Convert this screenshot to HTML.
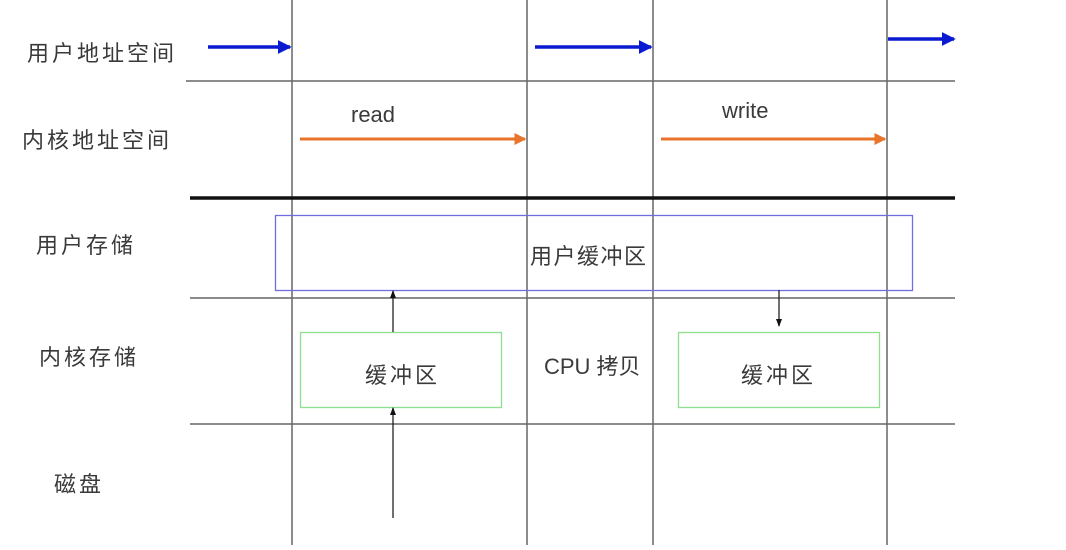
<!DOCTYPE html>
<html><head><meta charset="utf-8"><style>
html,body{margin:0;padding:0;background:#fff;width:1066px;height:550px;overflow:hidden}
svg{display:block}
text{font-family:"Liberation Sans","Noto Sans CJK SC",sans-serif;fill:#3a3a3a}
.c{font-size:22px;letter-spacing:3px}
</style></head><body>
<svg width="1066" height="550" viewBox="0 0 1066 550">
<defs>
<marker id="b" markerWidth="4" markerHeight="4" refX="3.5" refY="2" orient="auto"><path d="M0,0 L4,2 L0,4 z" fill="#0a1ad0"/></marker>
<marker id="o" markerWidth="4" markerHeight="4" refX="3.5" refY="2" orient="auto"><path d="M0,0 L4,2 L0,4 z" fill="#e8742c"/></marker>
<marker id="k" markerWidth="8" markerHeight="8" refX="7" refY="4" orient="auto" markerUnits="userSpaceOnUse"><path d="M0,1 L8,4 L0,7 z" fill="#111"/></marker>
</defs>
<g stroke="#666" stroke-width="1.5">
<line x1="186" y1="81" x2="955" y2="81"/>
<line x1="190" y1="298" x2="955" y2="298"/>
<line x1="190" y1="424" x2="955" y2="424"/>
<line x1="292" y1="0" x2="292" y2="545"/>
<line x1="527" y1="0" x2="527" y2="545"/>
<line x1="653" y1="0" x2="653" y2="545"/>
<line x1="887" y1="0" x2="887" y2="545"/>
</g>
<line x1="190" y1="198" x2="955" y2="198" stroke="#111" stroke-width="3.5"/>
<rect x="275.5" y="215.5" width="637" height="75" fill="none" stroke="#6e6ee0" stroke-width="1.3"/>
<rect x="300.5" y="332.5" width="201" height="75" fill="none" stroke="#8ee08e" stroke-width="1.3"/>
<rect x="678.5" y="332.5" width="201" height="75" fill="none" stroke="#8ee08e" stroke-width="1.3"/>
<g stroke="#0a1ad0" stroke-width="3.5">
<line x1="208" y1="47" x2="290" y2="47" marker-end="url(#b)"/>
<line x1="535" y1="47" x2="651" y2="47" marker-end="url(#b)"/>
<line x1="888" y1="39" x2="954" y2="39" marker-end="url(#b)"/>
</g>
<g stroke="#e8742c" stroke-width="3">
<line x1="300" y1="139" x2="525" y2="139" marker-end="url(#o)"/>
<line x1="661" y1="139" x2="885" y2="139" marker-end="url(#o)"/>
</g>
<g stroke="#222" stroke-width="1.3">
<line x1="393" y1="332" x2="393" y2="291" marker-end="url(#k)"/>
<line x1="393" y1="518" x2="393" y2="408" marker-end="url(#k)"/>
<line x1="779" y1="290" x2="779" y2="326" marker-end="url(#k)"/>
</g>
<g>
<text class="c" x="27" y="61">用户地址空间</text>
<text class="c" x="22" y="148">内核地址空间</text>
<text class="c" x="36" y="253">用户存储</text>
<text class="c" x="39" y="365">内核存储</text>
<text class="c" x="54" y="492">磁盘</text>
<text class="c" x="530" y="264" style="letter-spacing:1.5px">用户缓冲区</text>
<text class="c" x="365" y="383">缓冲区</text>
<text class="c" x="741" y="383">缓冲区</text>
<text x="544" y="374" font-size="22">CPU 拷贝</text>
<text x="351" y="122" font-size="22">read</text>
<text x="722" y="118" font-size="22">write</text>
</g>
</svg>
</body></html>
